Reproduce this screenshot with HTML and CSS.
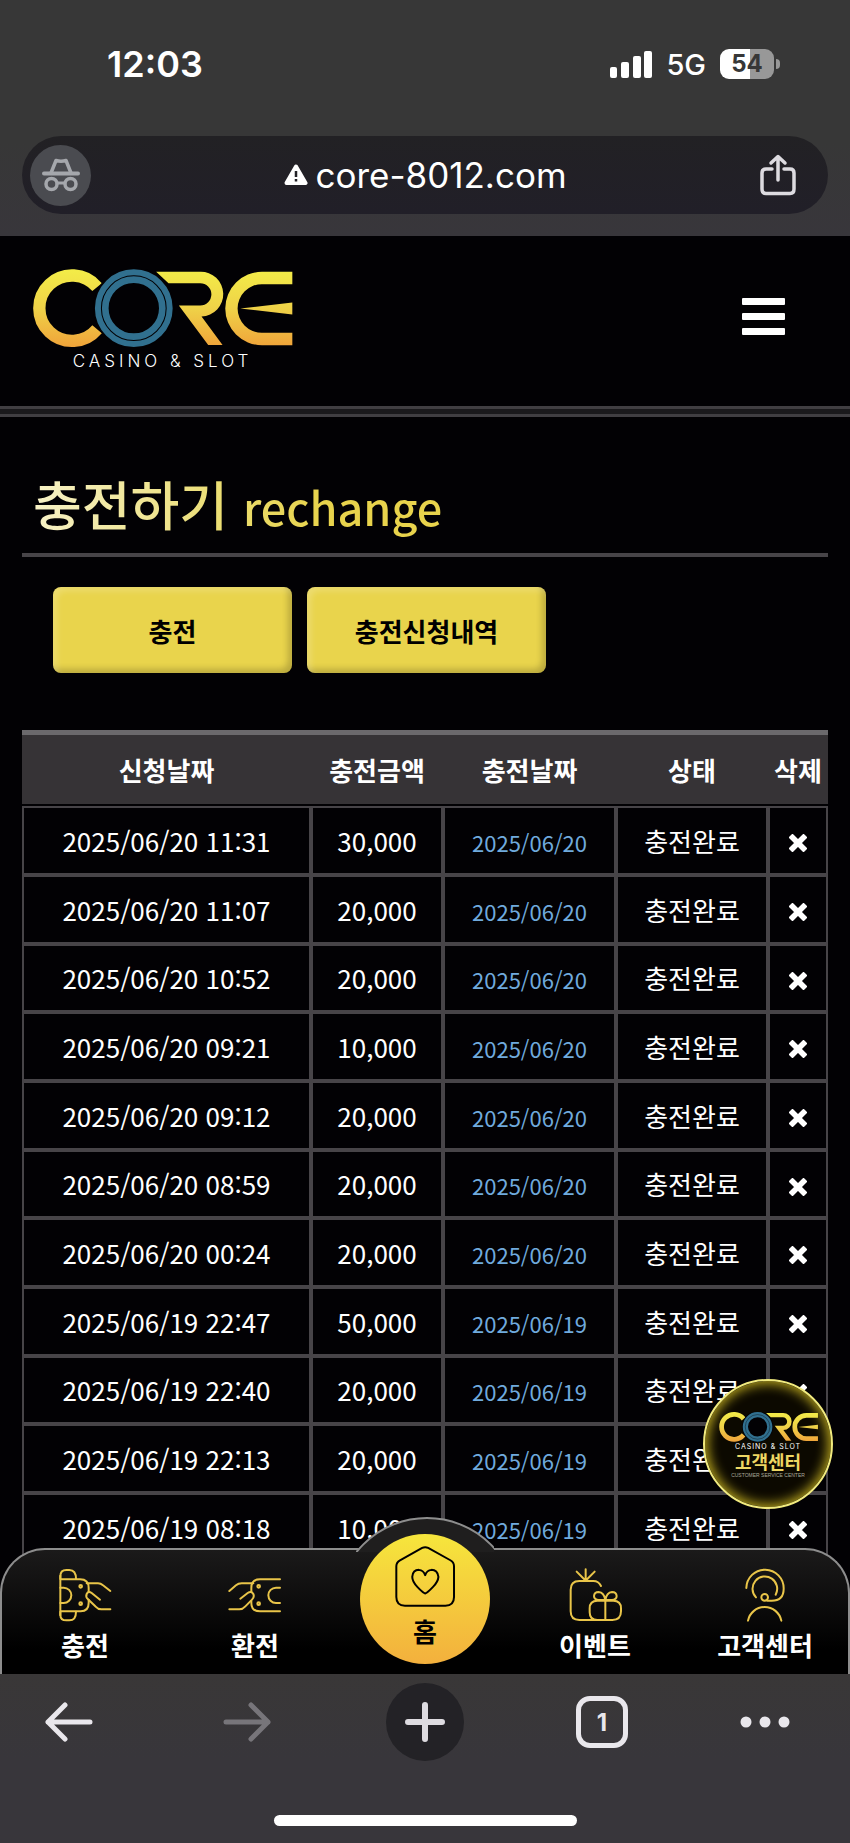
FILE: index.html
```html
<!DOCTYPE html>
<html lang="ko">
<head>
    <meta charset="UTF-8">
    <meta content="width=device-width" name="viewport">
    <title>충전하기</title>
    <link rel="stylesheet" href="styles.css">
</head>
<body>
    <svg class="defs" aria-hidden="true">
        <defs>
            <linearGradient id="gold" gradientUnits="userSpaceOnUse" x1="0" y1="100" x2="0" y2="330">
                <stop offset="0" stop-color="#f3ec48"/>
                <stop offset=".5" stop-color="#efd248"/>
                <stop offset="1" stop-color="#f0a43a"/>
            </linearGradient>
            <symbol id="core" viewBox="96 98 782 236">
                <path d="M291 152A98 98 0 1 0 291 278" fill="none" stroke="url(#gold)" stroke-width="37"/>
                <circle cx="401" cy="215" r="122" fill="#020104"/>
                <path d="M468 106H600A67 67 0 0 1 604 240L667 325H624L536 207H600A33 33 0 0 0 600 140H505Z" fill="url(#gold)"/>
                <path d="M876 106H785A110 110 0 0 0 785 326H876V289H785A73 73 0 0 1 785 143H876Z" fill="url(#gold)"/>
                <path d="M720 216L876 198V234Z" fill="url(#gold)"/>
                <circle cx="401" cy="215" r="96" fill="none" stroke="#31708f" stroke-width="41"/>
                <circle cx="401" cy="215" r="97" fill="none" stroke="#020104" stroke-width="3"/>
            </symbol>
            <symbol id="del" viewBox="0 0 18 18">
                <path d="M3.500 3.500L14.500 14.500M14.500 3.500L3.500 14.500" stroke="#fff" stroke-width="5.600" stroke-linecap="square" stroke-linejoin="round"/>
            </symbol>
        </defs>
    </svg>

    <div class="browser-top">
        <div class="status">
            <span class="time">12:03</span>
            <div class="signal">
                <svg width="42" height="27" viewBox="0 0 42 27" fill="#fff">
                    <rect x="0" y="16" width="7" height="11" rx="2"/>
                    <rect x="11" y="11" width="8" height="16" rx="2"/>
                    <rect x="23" y="5" width="8" height="22" rx="2"/>
                    <rect x="34" y="0" width="8" height="27" rx="2"/>
                </svg>
                <span class="net">5G</span>
                <span class="battery">54</span>
            </div>
        </div>
        <div class="address">
            <span class="incognito">
                <svg width="38" height="34" viewBox="0 0 38 34" fill="none" stroke="#a5a7ac" stroke-width="3">
                    <path d="M2 15.500H36" stroke-width="4" stroke-linecap="round"/>
                    <path d="M9 15L14 2.500Q19 4 24 2.500L29 15" stroke-width="3.500" stroke-linejoin="round"/>
                    <circle cx="9.500" cy="26" r="5.500" stroke-width="3.500"/>
                    <circle cx="28.500" cy="26" r="5.500" stroke-width="3.500"/>
                    <path d="M15 25H23"/>
                </svg>
            </span>
            <a class="url" href="#">
                <svg width="24" height="22" viewBox="0 0 24 22">
                    <path d="M12 2.500L21.500 19H2.500Z" fill="#fff" stroke="#fff" stroke-width="4" stroke-linejoin="round"/>
                    <path d="M12 7V13M12 15V17.500" stroke="#222126" stroke-width="2.500"/>
                </svg>
                core-8012.com
            </a>
            <button class="icon-btn share" aria-label="공유">
                <svg width="36" height="42" viewBox="0 0 36 42" fill="none" stroke="#dddbe0" stroke-width="3.500" stroke-linecap="round">
                    <path d="M12 15H6Q2 15 2 19V35Q2 39.500 6 39.500H30Q34 39.500 34 35V19Q34 15 30 15H24"/>
                    <path d="M18 26V3M11 9L18 2.500L25 9" stroke-linejoin="round"/>
                </svg>
            </button>
        </div>
    </div>

    <div class="page">
        <div class="header">
            <a href="#" class="logo">
                <svg width="261" height="79"><use href="#core"/></svg>
                <span>CASINO &amp; SLOT</span>
            </a>
            <button class="menu" aria-label="메뉴"><i></i><i></i><i></i></button>
        </div>
        <div class="line"></div>

        <div class="content">
            <h2>충전하기 <small>rechange</small></h2>
            <div class="tabs">
                <button class="btn">충전</button>
                <button class="btn">충전신청내역</button>
            </div>
            <table>
                <colgroup>
                    <col class="c-req"><col class="c-sum"><col class="c-date"><col class="c-state"><col class="c-del">
                </colgroup>
                <thead>
                    <tr><th>신청날짜</th><th>충전금액</th><th>충전날짜</th><th>상태</th><th>삭제</th></tr>
                </thead>
                <tbody>
                    <tr><td>2025/06/20 11:31</td><td>30,000</td><td class="date">2025/06/20</td><td>충전완료</td><td><button class="del" aria-label="삭제"><svg><use href="#del"/></svg></button></td></tr>
                    <tr><td>2025/06/20 11:07</td><td>20,000</td><td class="date">2025/06/20</td><td>충전완료</td><td><button class="del" aria-label="삭제"><svg><use href="#del"/></svg></button></td></tr>
                    <tr><td>2025/06/20 10:52</td><td>20,000</td><td class="date">2025/06/20</td><td>충전완료</td><td><button class="del" aria-label="삭제"><svg><use href="#del"/></svg></button></td></tr>
                    <tr><td>2025/06/20 09:21</td><td>10,000</td><td class="date">2025/06/20</td><td>충전완료</td><td><button class="del" aria-label="삭제"><svg><use href="#del"/></svg></button></td></tr>
                    <tr><td>2025/06/20 09:12</td><td>20,000</td><td class="date">2025/06/20</td><td>충전완료</td><td><button class="del" aria-label="삭제"><svg><use href="#del"/></svg></button></td></tr>
                    <tr><td>2025/06/20 08:59</td><td>20,000</td><td class="date">2025/06/20</td><td>충전완료</td><td><button class="del" aria-label="삭제"><svg><use href="#del"/></svg></button></td></tr>
                    <tr><td>2025/06/20 00:24</td><td>20,000</td><td class="date">2025/06/20</td><td>충전완료</td><td><button class="del" aria-label="삭제"><svg><use href="#del"/></svg></button></td></tr>
                    <tr><td>2025/06/19 22:47</td><td>50,000</td><td class="date">2025/06/19</td><td>충전완료</td><td><button class="del" aria-label="삭제"><svg><use href="#del"/></svg></button></td></tr>
                    <tr><td>2025/06/19 22:40</td><td>20,000</td><td class="date">2025/06/19</td><td>충전완료</td><td><button class="del" aria-label="삭제"><svg><use href="#del"/></svg></button></td></tr>
                    <tr><td>2025/06/19 22:13</td><td>20,000</td><td class="date">2025/06/19</td><td>충전완료</td><td><button class="del" aria-label="삭제"><svg><use href="#del"/></svg></button></td></tr>
                    <tr><td>2025/06/19 08:18</td><td>10,000</td><td class="date">2025/06/19</td><td>충전완료</td><td><button class="del" aria-label="삭제"><svg><use href="#del"/></svg></button></td></tr>
                </tbody>
            </table>
        </div>

        <a href="#" class="support">
            <svg width="101" height="30"><use href="#core"/></svg>
            <span class="tag">CASINO &amp; SLOT</span>
            <b>고객센터</b>
            <span class="sub">CUSTOMER SERVICE CENTER</span>
        </a>

        <div class="nav">
            <div class="bump"></div>
            <a href="#">
                <svg viewBox="172 203 162 162">
                    <path d="M179 226V345M179 237H238Q264 237 264 263V274M264 298V308Q264 333 240 333H179"/>
                    <path d="M179 236V228Q179 209 197 209H206Q226 209 226 236M179 334V343Q179 360 197 360H206Q226 360 226 334"/>
                    <path d="M179 262H189A23 23 0 0 1 189 308H179"/>
                    <path d="M258 249H292Q300 249 307 255L329 272M298 298L273 278Q263 270 258 281Q254 290 262 297L284 318Q292 327 302 327H329"/>
                    <circle cx="240" cy="258" r="4"/><circle cx="240" cy="310" r="4"/>
                </svg>
                충전
            </a>
            <a href="#">
                <svg viewBox="684 203 162 162">
                    <path d="M840 237H780Q754 237 754 263V274M754 302V308Q754 333 780 333H840"/>
                    <path d="M840 262H828A23 23 0 0 0 828 308H840"/>
                    <path d="M688 272L708 255Q715 249 725 249H760M721 295L743 278Q754 270 760 281Q764 290 756 298L736 318Q728 327 718 327H688"/>
                    <circle cx="776" cy="258" r="4"/><circle cx="776" cy="310" r="4"/>
                </svg>
                환전
            </a>
            <a href="#" class="home">
                <svg viewBox="160 135 190 190">
                    <path d="M245 144Q254 139 263 144L330 181Q341 187 341 199V292Q341 318 315 318H193Q167 318 167 292V199Q167 187 178 181Z"/>
                    <path d="M254 281Q248 280 231 262Q215 246 215 231Q217 210 235 210Q249 211 254 226Q259 211 273 210Q291 210 294 231Q293 246 277 262Q260 280 254 281Z"/>
                </svg>
                홈
            </a>
            <a href="#">
                <svg viewBox="172 203 162 162">
                    <path d="M225 207V240M198 214L223 239M252 214L227 239"/>
                    <path d="M271 257Q264 242 248 242H206Q180 242 180 268V333Q180 359 206 359H305Q331 359 331 333V324Q331 301 308 301H260Q237 301 237 324V336Q237 359 260 359M284 301V359"/>
                    <path d="M284 299H264Q250 298 250 287Q251 275 264 275Q280 276 284 299Q288 276 304 275Q317 275 318 287Q318 298 304 299Z"/>
                </svg>
                이벤트
            </a>
            <a href="#">
                <svg viewBox="685 203 162 162">
                    <path d="M710 263A56 56 0 0 1 822 265Q822 301 786 301H773"/>
                    <path d="M739 291A37 37 0 1 1 798 283"/>
                    <circle cx="765" cy="291" r="10"/>
                    <path d="M715 361A51 51 0 0 1 815 361"/>
                </svg>
                고객센터
            </a>
        </div>
    </div>

    <div class="browser-bottom">
        <div class="tools">
            <button class="icon-btn" aria-label="뒤로">
                <svg width="48" height="40" viewBox="0 0 48 40" fill="none" stroke="#e9e7ec" stroke-width="5" stroke-linecap="round" stroke-linejoin="round"><path d="M45 20H3M20 3L3 20L20 37"/></svg>
            </button>
            <button class="icon-btn" aria-label="앞으로">
                <svg width="48" height="40" viewBox="0 0 48 40" fill="none" stroke="#77757a" stroke-width="5" stroke-linecap="round" stroke-linejoin="round"><path d="M3 20H45M28 3L45 20L28 37"/></svg>
            </button>
            <button class="icon-btn plus" aria-label="새 탭">
                <svg width="40" height="40" viewBox="0 0 40 40" stroke="#dddbe0" stroke-width="6" stroke-linecap="round"><path d="M20 3V37M3 20H37"/></svg>
            </button>
            <button class="icon-btn count">1</button>
            <button class="icon-btn" aria-label="더보기">
                <svg width="50" height="12" viewBox="0 0 50 12" fill="#e9e7ec"><circle cx="6" cy="6" r="5.500"/><circle cx="25" cy="6" r="5.500"/><circle cx="44" cy="6" r="5.500"/></svg>
            </button>
        </div>
        <div class="indicator"></div>
    </div>
</body>
</html>
```
FILE: styles.css
```css
* {
    margin: 0;
    padding: 0;
    box-sizing: border-box;
}
html {
    height: 100%;
}
body {
    height: 100%;
    display: flex;
    flex-direction: column;
    overflow: hidden;
    background-color: #020104;
    color: #fff;
    font-family: "Noto Sans CJK KR", sans-serif;
    font-size: 26px;
}
button {
    border: 0 none;
    background: none;
    color: inherit;
    font-family: inherit;
    cursor: pointer;
}
a {
    color: inherit;
    text-decoration: none;
}
svg {
    display: block;
}
.defs {
    position: absolute;
    width: 0;
    height: 0;
}

/* browser, top */
.browser-top {
    flex: none;
    padding: 0 22px 22px;
    background: linear-gradient(#373737 60%, #38363b);
    font-family: Inter, sans-serif;
}
.status {
    height: 136px;
    padding: 0 54px 8px 85px;
    display: flex;
    align-items: center;
    justify-content: space-between;
}
.time {
    font-size: 36px;
    font-weight: 600;
}
.signal {
    display: flex;
    align-items: center;
    gap: 14px;
}
.net {
    font-size: 29px;
    font-weight: 500;
}
.battery {
    position: relative;
    width: 54px;
    height: 30px;
    border-radius: 9px;
    background: linear-gradient(90deg, #fff 55%, #989898 55%);
    color: #373737;
    font-size: 24px;
    font-weight: 700;
    line-height: 30px;
    text-align: center;
}
.battery:after {
    content: "";
    position: absolute;
    left: 56px;
    top: 10px;
    width: 4px;
    height: 10px;
    border-radius: 0 4px 4px 0;
    background-color: #989898;
}
.address {
    height: 78px;
    padding: 0 32px 0 8px;
    display: flex;
    align-items: center;
    justify-content: space-between;
    border-radius: 39px;
    background: linear-gradient(#222124, #211f28);
}
.incognito {
    width: 61px;
    height: 61px;
    display: flex;
    align-items: center;
    justify-content: center;
    border-radius: 50%;
    background-color: #4a4b50;
}
.url {
    display: flex;
    align-items: center;
    gap: 7px;
    font-size: 35px;
}
.icon-btn {
    display: flex;
    align-items: center;
    justify-content: center;
}

/* site */
.page {
    position: relative;
    flex: 1;
    overflow: hidden;
}
.header {
    height: 170px;
    padding: 0 65px 0 32px;
    display: flex;
    align-items: flex-start;
    justify-content: space-between;
}
.line {
    height: 11px;
    border-top: 3px solid #403e42;
    border-bottom: 3px solid #403e42;
    background-color: #1a191c;
}
.logo {
    padding-top: 33px;
}
.logo span {
    display: block;
    font-family: Inter, sans-serif;
    font-size: 17px;
    font-weight: 300;
    line-height: 26px;
    letter-spacing: 4px;
    text-align: center;
}
.menu {
    width: 43px;
    margin-top: 62px;
    display: flex;
    flex-direction: column;
    gap: 8px;
}
.menu i {
    height: 7px;
    border-radius: 1px;
    background-color: #fff;
}
.content {
    padding: 52px 22px 0;
}
h2 {
    height: 88px;
    padding-left: 11px;
    border-bottom: 4px solid #474448;
    font-size: 53px;
    font-weight: 500;
    line-height: 68px;
}
h2, h2 small {
    background: linear-gradient(90deg, #f8f3cc, #eadb6a 220px, #e8d34c 300px);
    -webkit-background-clip: text;
    background-clip: text;
    color: transparent;
}
h2 small {
    background: none;
    font-size: 45px;
}
.tabs {
    display: flex;
    gap: 15px;
    padding: 30px 31px 57px;
}
.btn {
    width: 239px;
    height: 86px;
    border-radius: 8px;
    background-color: #e9d44c;
    box-shadow: inset 4px 4px 6px rgba(255, 255, 255, .2), inset -4px -4px 6px rgba(0, 0, 0, .2);
    color: #000;
    font-size: 26px;
    font-weight: 700;
}
table {
    width: 100%;
    table-layout: fixed;
    border-spacing: 0;
    text-align: center;
}
.c-req { width: 289px; }
.c-sum { width: 132px; }
.c-date { width: 173px; }
.c-state { width: 152px; }
.c-del { width: 60px; }
th {
    height: 76px;
    border-top: 5px solid #6b696c;
    border-bottom: 2px solid #020104;
    background-color: #363336;
    font-weight: 700;
    white-space: nowrap;
}
td {
    height: 69px;
    border: 2px solid #474448;
    line-height: 36px;
    white-space: nowrap;
}
tr:nth-child(3n) td {
    height: 68px;
}
td.date {
    padding-top: 2px;
    color: #70aadd;
    font-size: 22px;
}
.del {
    display: block;
    margin: 5px auto 0;
}
.del svg {
    width: 18px;
    height: 18px;
}

/* round button over the table */
.support {
    position: absolute;
    right: 17px;
    bottom: 165px;
    width: 130px;
    height: 130px;
    padding-top: 31px;
    display: flex;
    flex-direction: column;
    align-items: center;
    border-radius: 50%;
    border: 2px solid #f1ea7e;
    background-color: #0c0900;
    box-shadow: inset 0 0 12px 3px #b3a01c;
}
.tag {
    font-family: Inter, sans-serif;
    font-size: 7px;
    line-height: 9px;
    letter-spacing: 1px;
}
.support b {
    color: #eed763;
    font-size: 18px;
    line-height: 20px;
}
.sub {
    color: #aaa99c;
    font-family: "Liberation Sans", sans-serif;
    font-size: 5px;
    line-height: 8px;
}

/* site, bottom menu */
.nav {
    position: absolute;
    left: 0;
    right: 0;
    bottom: 0;
    height: 126px;
    display: grid;
    grid-template-columns: repeat(5, 1fr);
}
.nav:before {
    content: "";
    position: absolute;
    top: 0;
    right: 0;
    bottom: 0;
    left: 0;
    border: 2px solid #8d8d8d;
    border-bottom: 0 none;
    border-radius: 45px 45px 0 0;
    background: linear-gradient(#1b1a1a, #000 80%);
}
.nav a {
    position: relative;
    padding-top: 20px;
    display: flex;
    flex-direction: column;
    align-items: center;
    gap: 5px;
    font-weight: 700;
    line-height: 36px;
}
.nav svg {
    width: 54px;
    height: 54px;
    fill: none;
    stroke: #e9c549;
    stroke-width: 6;
    stroke-linecap: round;
    stroke-linejoin: round;
}
.bump {
    position: absolute;
    left: 50%;
    bottom: 122px;
    width: 138px;
    height: 35px;
    margin-left: -69px;
    overflow: hidden;
}
.bump:before {
    content: "";
    position: absolute;
    left: -20px;
    top: 0;
    width: 178px;
    height: 178px;
    border: 2px solid #8d8d8d;
    border-radius: 50%;
    background-color: #1f1e1e;
}
.nav .home {
    width: 130px;
    height: 130px;
    margin: -14px auto 0;
    padding-top: 11px;
    gap: 5px;
    border-radius: 50%;
    background: linear-gradient(#f6e63c, #f3b03d);
    color: #000;
}
.nav .home svg {
    width: 63px;
    height: 63px;
    stroke: #000;
    stroke-width: 6;
}

/* browser, bottom */
.browser-bottom {
    flex: none;
    height: 169px;
    background: linear-gradient(#393737, #38363b 50%);
}
.tools {
    height: 96px;
    padding-right: 30px;
    display: grid;
    grid-template-columns: 138fr 218fr 138fr 216fr 110fr;
    align-items: center;
    justify-items: center;
}
.plus {
    width: 78px;
    height: 78px;
    border-radius: 50%;
    background-color: #232226;
}
.count {
    width: 52px;
    height: 52px;
    border: 5px solid #e9e7ec;
    border-radius: 14px;
    color: #e9e7ec;
    font-family: Inter, sans-serif;
    font-size: 24px;
    font-weight: 700;
}
.indicator {
    width: 303px;
    height: 11px;
    margin: 45px auto 0;
    border-radius: 6px;
    background-color: #fff;
}
```
